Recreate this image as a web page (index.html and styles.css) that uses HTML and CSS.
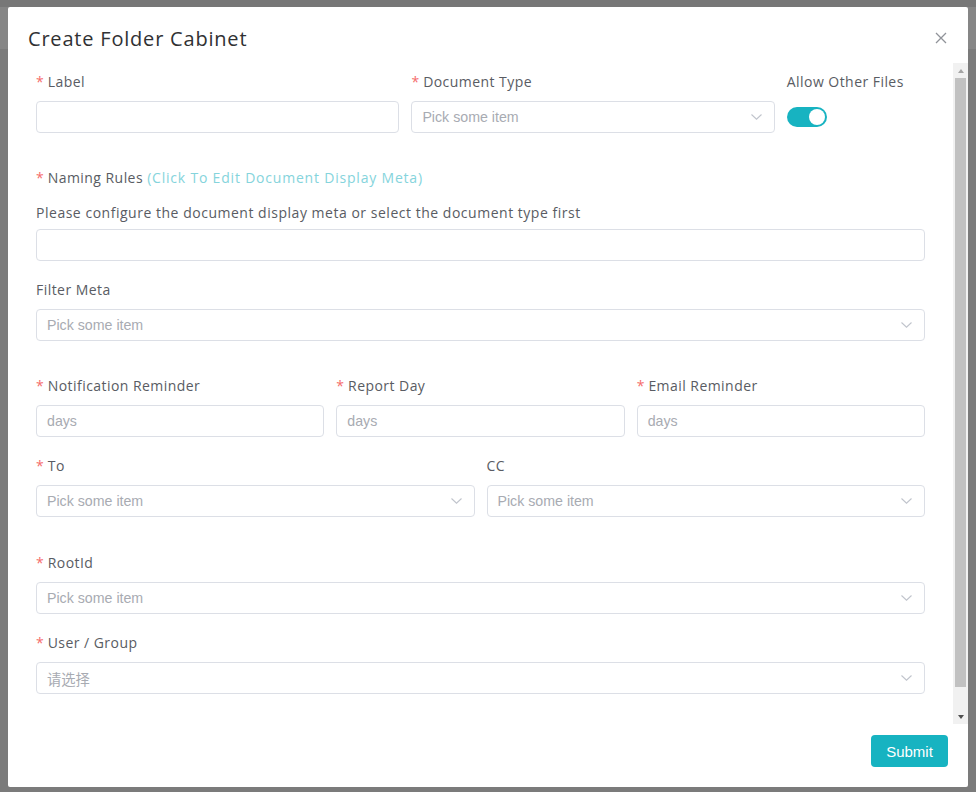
FILE: index.html
```html
<!DOCTYPE html>
<html lang="en">
<head>
<meta charset="utf-8">
<title>Create Folder Cabinet</title>
<link rel="stylesheet" href="styles.css">
</head>
<body>
<div class="backdrop">
  <div class="bd-top"></div>
  <div class="bd-bar"></div>
  <div class="bd-rest"></div>
</div>
<div class="modal">
  <div class="modal-header">
    <h2 class="modal-title">Create Folder Cabinet</h2>
    <button class="close-btn" aria-label="Close">
      <svg width="12" height="12" viewBox="0 0 12 12"><path d="M1 1L11 11M11 1L1 11" stroke="#909399" stroke-width="1.3" fill="none"/></svg>
    </button>
  </div>
  <div class="modal-body">
    <div class="form-scroll">
      <div class="row">
        <div class="col col-10">
          <div class="item">
            <label class="label"><span class="req">*</span>Label</label>
            <div class="input"></div>
          </div>
        </div>
        <div class="col col-10">
          <div class="item">
            <label class="label"><span class="req">*</span>Document Type</label>
            <div class="input select"><span class="ph">Pick some item</span><svg class="chev" width="11" height="6" viewBox="0 0 11 6"><path d="M0.5 0.5L5.5 5.2L10.5 0.5" stroke="#c0c4cc" stroke-width="1.1" fill="none"/></svg></div>
          </div>
        </div>
        <div class="col col-4">
          <div class="item">
            <label class="label">Allow Other Files</label>
            <div class="switch-wrap"><span class="switch"><span class="knob"></span></span></div>
          </div>
        </div>
      </div>

      <div class="item section naming">
        <label class="label"><span class="req">*</span>Naming Rules <span class="link">(Click To Edit Document Display Meta)</span></label>
        <div class="help">Please configure the document display meta or select the document type first</div>
        <div class="input"></div>
      </div>

      <div class="item">
        <label class="label">Filter Meta</label>
        <div class="input select"><span class="ph">Pick some item</span><svg class="chev" width="11" height="6" viewBox="0 0 11 6"><path d="M0.5 0.5L5.5 5.2L10.5 0.5" stroke="#c0c4cc" stroke-width="1.1" fill="none"/></svg></div>
      </div>

      <div class="row section">
        <div class="col col-8">
          <div class="item">
            <label class="label"><span class="req">*</span>Notification Reminder</label>
            <div class="input"><span class="ph">days</span></div>
          </div>
        </div>
        <div class="col col-8">
          <div class="item">
            <label class="label"><span class="req">*</span>Report Day</label>
            <div class="input"><span class="ph">days</span></div>
          </div>
        </div>
        <div class="col col-8">
          <div class="item">
            <label class="label"><span class="req">*</span>Email Reminder</label>
            <div class="input"><span class="ph">days</span></div>
          </div>
        </div>
      </div>

      <div class="row">
        <div class="col col-12">
          <div class="item">
            <label class="label"><span class="req">*</span>To</label>
            <div class="input select"><span class="ph">Pick some item</span><svg class="chev" width="11" height="6" viewBox="0 0 11 6"><path d="M0.5 0.5L5.5 5.2L10.5 0.5" stroke="#c0c4cc" stroke-width="1.1" fill="none"/></svg></div>
          </div>
        </div>
        <div class="col col-12">
          <div class="item">
            <label class="label">CC</label>
            <div class="input select"><span class="ph">Pick some item</span><svg class="chev" width="11" height="6" viewBox="0 0 11 6"><path d="M0.5 0.5L5.5 5.2L10.5 0.5" stroke="#c0c4cc" stroke-width="1.1" fill="none"/></svg></div>
          </div>
        </div>
      </div>

      <div class="item section-lg">
        <label class="label"><span class="req">*</span>RootId</label>
        <div class="input select"><span class="ph">Pick some item</span><svg class="chev" width="11" height="6" viewBox="0 0 11 6"><path d="M0.5 0.5L5.5 5.2L10.5 0.5" stroke="#c0c4cc" stroke-width="1.1" fill="none"/></svg></div>
      </div>

      <div class="item">
        <label class="label"><span class="req">*</span>User / Group</label>
        <div class="input select"><span class="ph cjk">请选择</span><svg class="chev" width="11" height="6" viewBox="0 0 11 6"><path d="M0.5 0.5L5.5 5.2L10.5 0.5" stroke="#c0c4cc" stroke-width="1.1" fill="none"/></svg></div>
      </div>
    </div>
    <div class="scrollbar">
      <div class="sb-btn"><span class="tri-up"></span></div>
      <div class="sb-track"><div class="sb-thumb"></div></div>
      <div class="sb-btn"><span class="tri-down"></span></div>
    </div>
  </div>
  <div class="modal-footer">
    <button class="btn-primary">Submit</button>
  </div>
</div>
</body>
</html>
```
FILE: styles.css
```css
* { box-sizing: border-box; }
html, body { margin: 0; padding: 0; }
body {
  width: 976px;
  height: 792px;
  overflow: hidden;
  background: #7b7b7b;
  font-family: "Open Sans", "Noto Sans", sans-serif;
}
.backdrop { display: flex; flex-direction: column; height: 792px; }
.bd-top { height: 7px; background: #777777; }
.bd-bar { height: 42px; background: #868686; }
.bd-rest { flex: 1; background: #7b7b7b; }

.modal {
  position: absolute;
  top: 7px;
  left: 8px;
  width: 960px;
  height: 780px;
  background: #fff;
  border-radius: 2px;
  display: flex;
  flex-direction: column;
}
.modal-header {
  height: 56px;
  padding: 20px 20px 0 20px;
  display: flex;
  justify-content: space-between;
  align-items: flex-start;
}
.modal-title {
  margin: 0;
  font-size: 20px;
  line-height: 24px;
  font-weight: 400;
  letter-spacing: 0.8px;
  color: #303133;
}
.close-btn {
  border: 0;
  background: none;
  padding: 0;
  margin-top: 5px;
  margin-right: 1px;
  width: 12px;
  height: 12px;
  display: flex;
}

.modal-body {
  height: 661px;
  display: flex;
}
.form-scroll {
  flex: 1;
  overflow: hidden;
  padding: 8px 28px 0 28px;
  display: flex;
  flex-direction: column;
}
.scrollbar {
  width: 15px;
  background: #f1f1f1;
  display: flex;
  flex-direction: column;
}
.sb-btn {
  height: 15px;
  display: flex;
  align-items: center;
  justify-content: center;
}
.tri-up {
  width: 0; height: 0;
  border-left: 3.5px solid transparent;
  border-right: 3.5px solid transparent;
  border-bottom: 4px solid #a3a3a3;
}
.tri-down {
  width: 0; height: 0;
  border-left: 3.5px solid transparent;
  border-right: 3.5px solid transparent;
  border-top: 4px solid #505050;
}
.sb-track { flex: 1; padding: 0 2px; }
.sb-thumb { height: 609px; background: #c1c1c1; }

.row {
  display: flex;
  margin-left: -6px;
  margin-right: -6px;
}
.col { padding: 0 6px; }
.col-10 { width: 41.6667%; }
.col-4 { width: 16.6667%; }
.col-8 { width: 33.3333%; }
.col-12 { width: 50%; }

.item { margin-bottom: 18px; }
.section { margin-top: 16px; }
.section-lg { margin-top: 17px; }

.label {
  display: block;
  font-size: 14px;
  line-height: 22px;
  letter-spacing: 0.45px;
  color: #595c63;
  margin-bottom: 8px;
  white-space: nowrap;
}
.req {
  color: #f56c6c;
  margin-right: 4px;
  letter-spacing: 0;
}
.link { color: #85d4dc; letter-spacing: 0.8px; }
.naming > .label { margin-bottom: 13px; }
.help {
  font-size: 14px;
  line-height: 22px;
  letter-spacing: 0.52px;
  color: #595c63;
  margin-bottom: 5px;
  white-space: nowrap;
}

.input {
  height: 32px;
  border: 1px solid #dcdfe6;
  border-radius: 4px;
  padding: 0 12px 0 10px;
  display: flex;
  align-items: center;
  justify-content: space-between;
  background: #fff;
}
.ph {
  font-family: "Liberation Sans", Arial, sans-serif;
  font-size: 14.2px;
  color: #a8abb2;
}
.ph.cjk { font-family: "Liberation Sans", "Noto Sans CJK SC", sans-serif; font-size: 14.3px; }
.chev { flex: none; }

.switch-wrap { height: 32px; display: flex; align-items: center; }
.switch {
  width: 40px;
  height: 20px;
  border-radius: 10px;
  background: #17b3c1;
  display: flex;
  align-items: center;
  justify-content: flex-end;
  padding: 0 2px;
}
.knob {
  width: 16px;
  height: 16px;
  border-radius: 50%;
  background: #fff;
}

.modal-footer {
  height: 63px;
  padding: 11px 20px 0 0;
  display: flex;
  justify-content: flex-end;
  align-items: flex-start;
}
.btn-primary {
  height: 32px;
  width: 77px;
  border: 0;
  border-radius: 4px;
  background: #17b3c1;
  color: #fff;
  font-family: "Liberation Sans", Arial, sans-serif;
  font-size: 15px;
  padding: 0;
}
```
